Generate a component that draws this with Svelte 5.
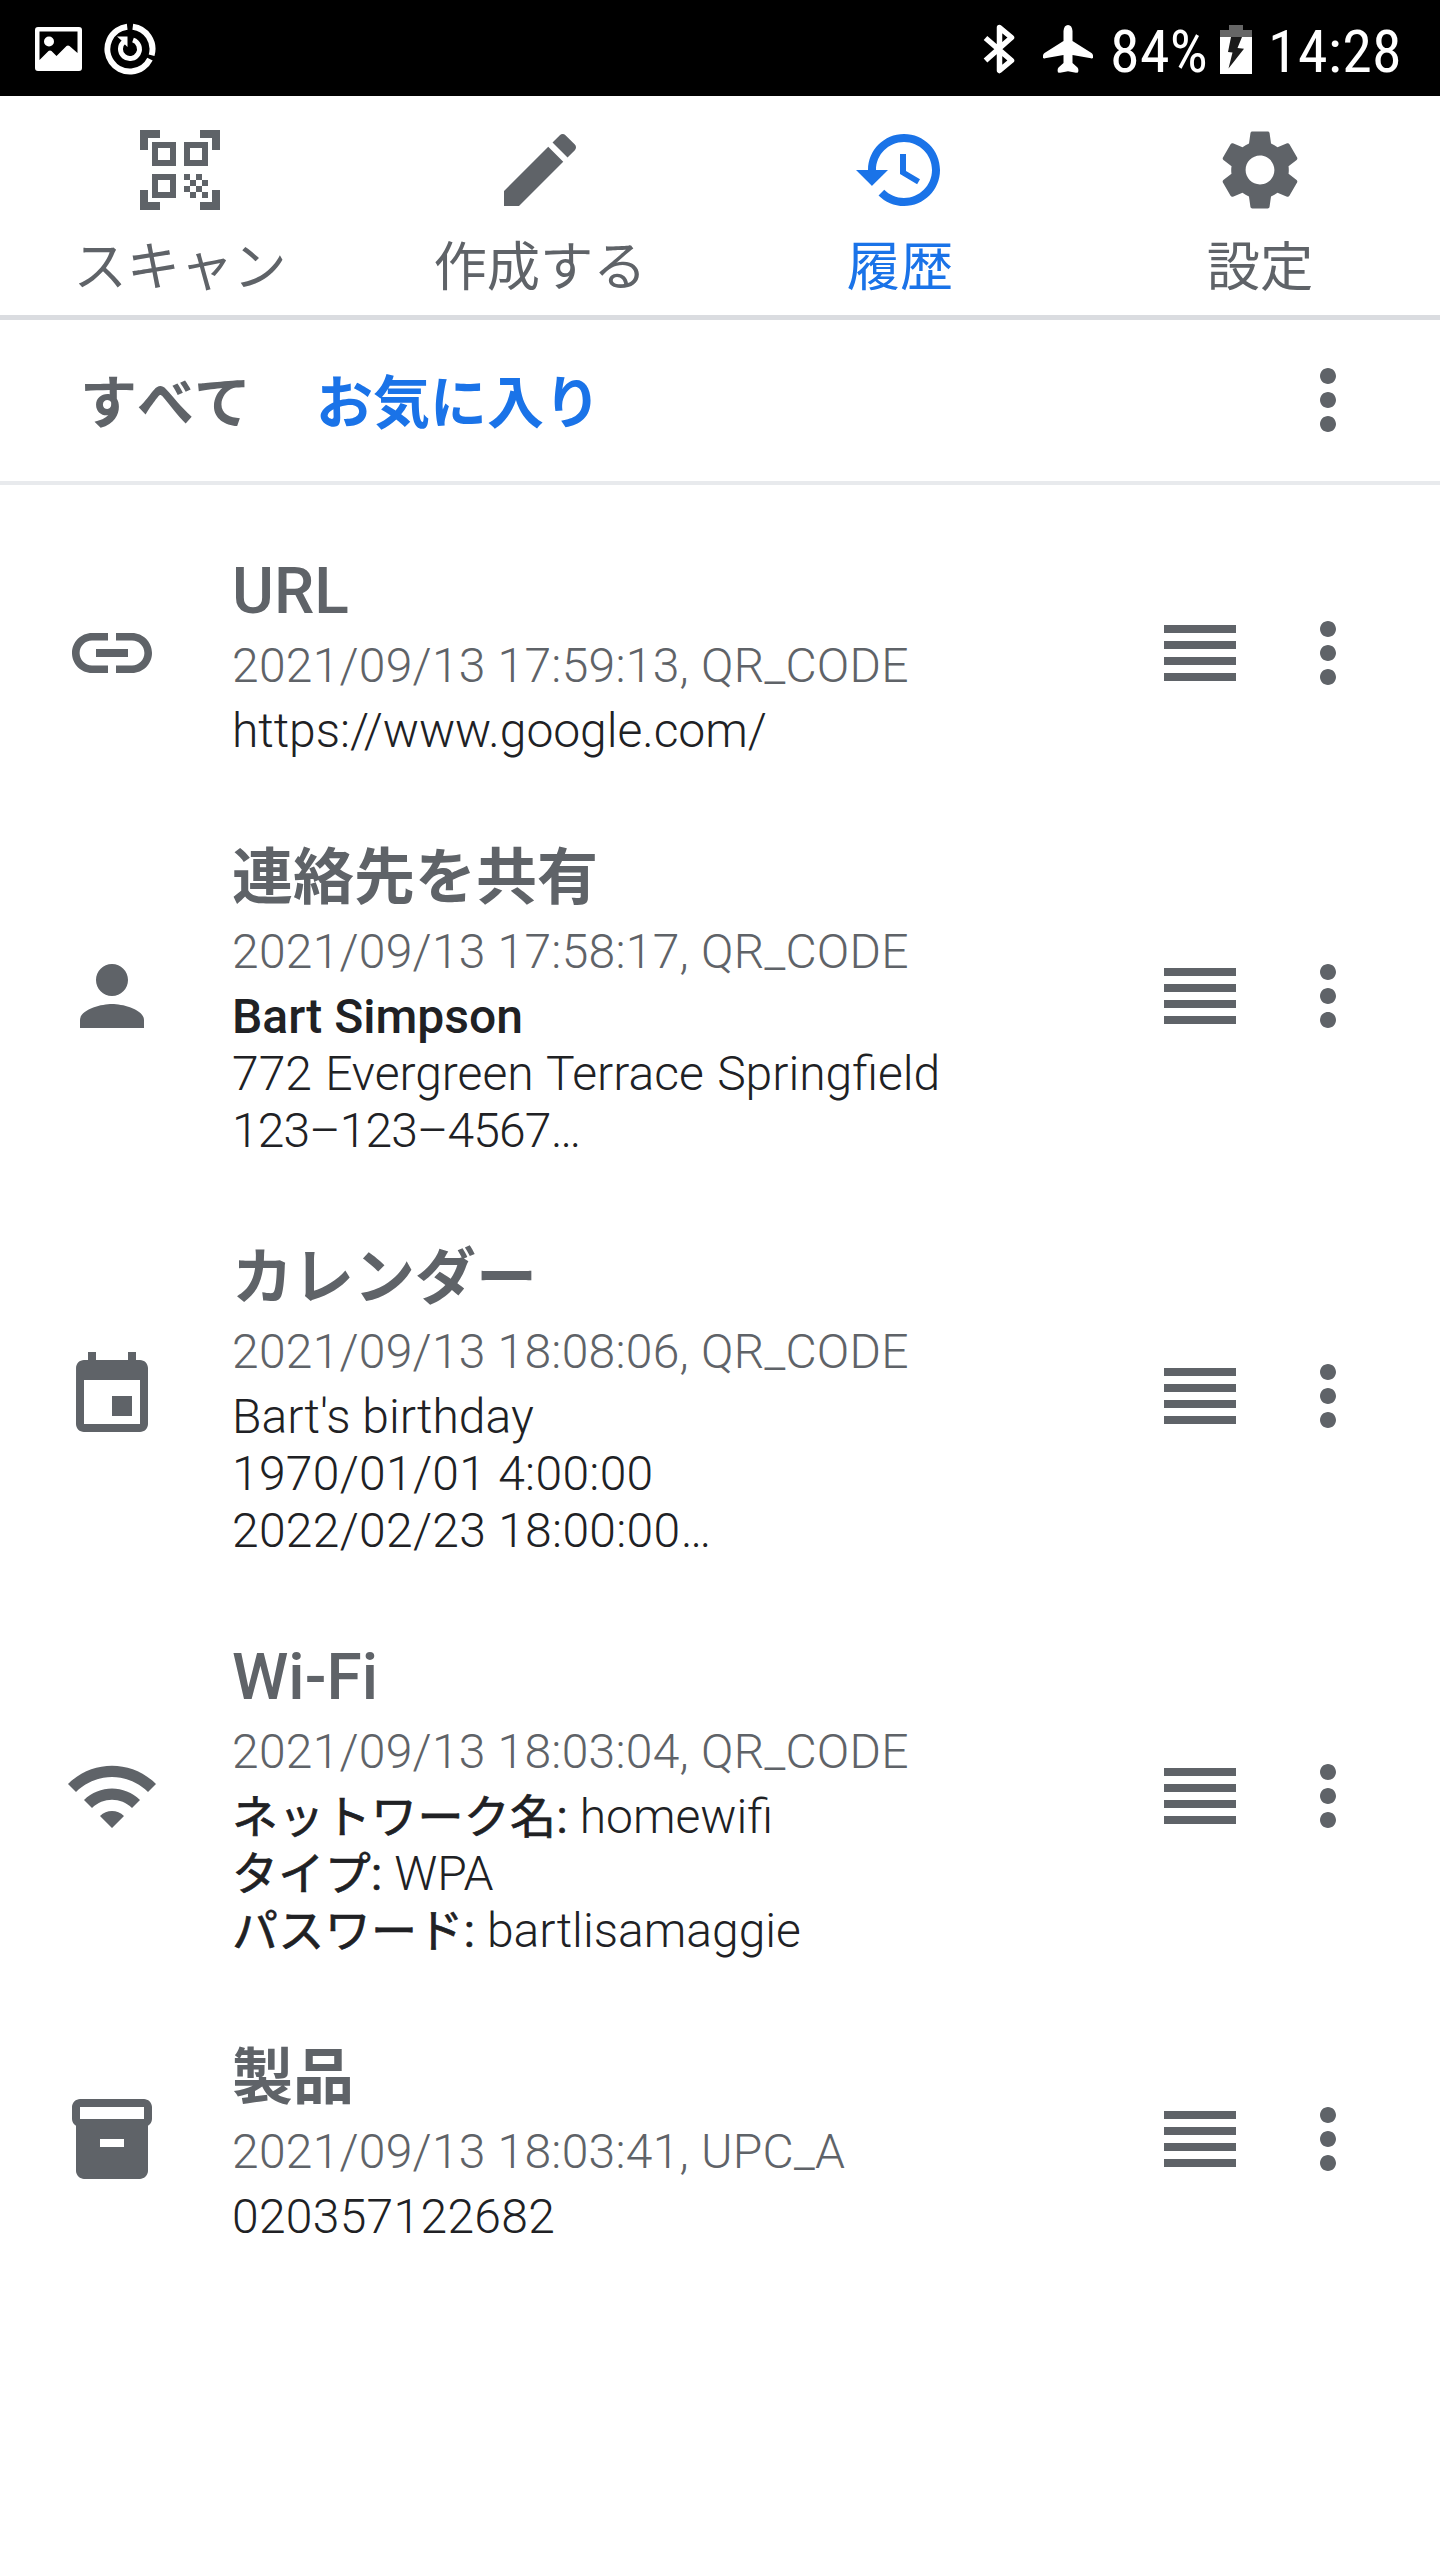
<script>
	const icons = {
		scan: 'M2 2h5v2H4v3H2zM17 2h5v5h-2V4h-3zM2 17h2v3h3v2H2zM20 17h2v5h-5v-2h3zM5 5v6h6V5zM6.5 6.5h3v3h-3zM13 5v6h6V5zM14.5 6.5h3v3h-3zM5 13v6h6v-6zM6.5 14.5h3v3h-3zM13 13h1.5v1.5H13zM16 13h1.5v1.5H16zM14.5 14.5H16V16h-1.5zM17.5 14.5H19V16h-1.5zM13 16h1.5v1.5H13zM16 16h1.5v1.5H16zM14.5 17.5H16V19h-1.5zM17.5 17.5H19V19h-1.5z',
		edit: 'M3 17.25V21h3.75L17.81 9.94l-3.75-3.75L3 17.25zM20.71 7.04c.39-.39.39-1.02 0-1.41l-2.34-2.34c-.39-.39-1.02-.39-1.41 0l-1.83 1.83 3.75 3.75 1.83-1.83z',
		history: 'M13 3c-4.97 0-9 4.03-9 9H1l3.89 3.89.07.14L9 12H6c0-3.87 3.13-7 7-7s7 3.13 7 7-3.13 7-7 7c-1.93 0-3.68-.79-4.94-2.06l-1.42 1.42C8.27 19.99 10.51 21 13 21c4.97 0 9-4.03 9-9s-4.03-9-9-9zm-1 5v5l4.28 2.54.72-1.21-3.5-2.08V8H12z',
		settings: 'M19.14 12.94c.04-.3.06-.61.06-.94 0-.32-.02-.64-.07-.94l2.03-1.58c.18-.14.23-.41.12-.61l-1.92-3.32c-.12-.22-.37-.29-.59-.22l-2.39.96c-.5-.38-1.03-.7-1.62-.94l-.36-2.54c-.04-.24-.24-.41-.48-.41h-3.84c-.24 0-.43.17-.47.41l-.36 2.54c-.59.24-1.13.57-1.62.94l-2.39-.96c-.22-.08-.47 0-.59.22L2.74 8.87c-.12.21-.08.47.12.61l2.03 1.58c-.05.3-.09.63-.09.94s.02.64.07.94l-2.03 1.58c-.18.14-.23.41-.12.61l1.92 3.32c.12.22.37.29.59.22l2.39-.96c.5.38 1.03.7 1.62.94l.36 2.54c.05.24.24.41.48.41h3.84c.24 0 .44-.17.47-.41l.36-2.54c.59-.24 1.13-.56 1.62-.94l2.39.96c.22.08.47 0 .59-.22l1.92-3.32c.12-.22.07-.47-.12-.61l-2.01-1.58zM12 15.6c-1.98 0-3.6-1.62-3.6-3.6s1.62-3.6 3.6-3.6 3.6 1.62 3.6 3.6-1.62 3.6-3.6 3.6z',
		link: 'M3.9 12c0-1.71 1.39-3.1 3.1-3.1h4V7H7c-2.76 0-5 2.24-5 5s2.24 5 5 5h4v-1.9H7c-1.71 0-3.1-1.39-3.1-3.1zM8 13h8v-2H8v2zm9-6h-4v1.9h4c1.71 0 3.1 1.39 3.1 3.1s-1.39 3.1-3.1 3.1h-4V17h4c2.76 0 5-2.24 5-5s-2.24-5-5-5z',
		person: 'M12 12c2.21 0 4-1.79 4-4s-1.79-4-4-4-4 1.79-4 4 1.79 4 4 4zm0 2c-2.67 0-8 1.34-8 4v2h16v-2c0-2.66-5.33-4-8-4z',
		event: 'M17 12h-5v5h5v-5zM16 1v2H8V1H6v2H5c-1.11 0-1.99.9-1.99 2L3 19c0 1.1.89 2 2 2h14c1.1 0 2-.9 2-2V5c0-1.1-.9-2-2-2h-1V1h-2zm3 18H5V8h14v11z',
		wifi: 'M1 9l2 2c4.97-4.97 13.03-4.97 18 0l2-2C16.93 2.93 7.08 2.93 1 9zm8 8l3 3 3-3c-1.65-1.66-4.34-1.66-6 0zm-4-4l2 2c2.76-2.76 7.24-2.76 10 0l2-2C15.14 9.14 8.87 9.14 5 13z',
		product: 'M20 2H4c-1 0-2 .9-2 2v3.01c0 .72.43 1.34 1 1.69V20c0 1.1 1.1 2 2 2h14c.9 0 2-.9 2-2V8.7c.57-.35 1-.97 1-1.69V4c0-1.1-1-2-2-2zm-5 12H9v-2h6v2zm5-7H4V4h16v3z',
		handle: 'M3 5h18v2H3zM3 9h18v2H3zM3 13h18v2H3zM3 17h18v2H3z',
		more: 'M12 8c1.1 0 2-.9 2-2s-.9-2-2-2-2 .9-2 2 .9 2 2 2zm0 2c-1.1 0-2 .9-2 2s.9 2 2 2 2-.9 2-2-.9-2-2-2zm0 6c-1.1 0-2 .9-2 2s.9 2 2 2 2-.9 2-2-.9-2-2-2z'
	};

	const nav = [
		{ icon: 'scan', label: 'スキャン' },
		{ icon: 'edit', label: '作成する' },
		{ icon: 'history', label: '履歴' },
		{ icon: 'settings', label: '設定' }
	];

	const tabs = ['すべて', 'お気に入り'];

	const items = [
		{
			icon: 'link',
			title: 'URL',
			meta: '2021/09/13 17:59:13, QR_CODE',
			lines: [{ text: 'https://www.google.com/', kind: 'url' }]
		},
		{
			icon: 'person',
			title: '連絡先を共有',
			meta: '2021/09/13 17:58:17, QR_CODE',
			lines: [
				{ label: 'Bart Simpson' },
				{ text: '772 Evergreen Terrace Springfield', kind: 'address' },
				{ text: '123–123–4567…', kind: 'phone' }
			]
		},
		{
			icon: 'event',
			title: 'カレンダー',
			meta: '2021/09/13 18:08:06, QR_CODE',
			lines: [
				{ text: "Bart's birthday" },
				{ text: '1970/01/01 4:00:00', kind: 'digits' },
				{ text: '2022/02/23 18:00:00…', kind: 'digits' }
			]
		},
		{
			icon: 'wifi',
			title: 'Wi-Fi',
			meta: '2021/09/13 18:03:04, QR_CODE',
			lines: [
				{ label: 'ネットワーク名:', text: 'homewifi' },
				{ label: 'タイプ:', text: 'WPA' },
				{ label: 'パスワード:', text: 'bartlisamaggie' }
			]
		},
		{
			icon: 'product',
			title: '製品',
			meta: '2021/09/13 18:03:41, UPC_A',
			lines: [{ text: '020357122682', kind: 'digits' }]
		}
	];

	let page = $state('history');
	let tab = $state('お気に入り');

	// Japanese text is set a little smaller than Latin
	function isJapanese(text) {
		return /[\u3040-\u30ff\u4e00-\u9fff]/.test(text);
	}
</script>

{#snippet icon(name)}
	<svg class="icon" viewBox="0 0 24 24"><path fill-rule="evenodd" d={icons[name]} /></svg>
{/snippet}

<div class="screen">
	<div class="status">
		<svg class="picture" viewBox="0 0 47 44">
			<path fill-rule="evenodd" d="M3 0h41q3 0 3 3v38q0 3-3 3H3q-3 0-3-3V3q0-3 3-3zM4.500 4.500V33l9-9q1.500-1 3 0l5 5 10-10q1.500-1 3 0l8 7V4.500z" />
			<circle cx="14" cy="14.500" r="5" />
		</svg>
		<svg class="sync" viewBox="0 0 52 52">
			<path class="ring" d="M23.200 3.700A22.500 22.500 0 1 0 46 36.200M28.800 3.700A22.500 22.500 0 0 1 47.600 32.200" />
			<path class="ring inner" d="M29 17A9.500 9.500 0 1 1 20 18.600" />
			<path d="M13 13.500h10.500v10.500l-3.500-3.500-2.500-3z" />
		</svg>
		<svg class="bluetooth" viewBox="0 0 32 50">
			<path d="M2.500 14L28.500 36.500 16.500 46.500V3.500l12 10L2.500 36.500" />
		</svg>
		<svg class="plane" viewBox="0 0 50 48">
			<path d="M25 0q4 0 4.500 6v10l19 12q2 1.500 1.500 5-1 .8-2 .3L29.500 30v8l5 4.500q1.500 2 .5 5l-2 .3-8-1.500-8 1.500-2-.3q-1-3 .5-5l5-4.500v-8L2 33.300q-1 .5-2-.3-.5-3.500 1.500-5l19-12V6Q21 0 25 0z" />
		</svg>
		<span class="battery-text">84%</span>
		<svg class="battery" viewBox="0 0 32 49">
			<path class="empty" d="M9 0h14v5h9v7H0V5h9z" />
			<path d="M0 12h32v37H0z" />
			<path class="bolt" d="M11 12h11l-4.500 11 6.500.7L8.500 43.500l4-16L8 27z" />
		</svg>
		<span class="clock">14:28</span>
	</div>

	<nav>
		{#each nav as item}
			<button class:active={page === item.icon} onclick={() => (page = item.icon)}>
				{@render icon(item.icon)}
				<span>{item.label}</span>
			</button>
		{/each}
	</nav>

	<div class="tabs">
		{#each tabs as name}
			<button class:active={tab === name} onclick={() => (tab = name)}>{name}</button>
		{/each}
		<div class="menu">{@render icon('more')}</div>
	</div>

	<div class="list">
		{#each items as item}
			<div class="row">
				{@render icon(item.icon)}
				<div class="text">
					<h2 class:ja={isJapanese(item.title)}>{item.title}</h2>
					<p class="meta">{item.meta}</p>
					{#each item.lines as line}
						<p class="line {line.kind ?? ''}">
							{#if line.label}<b class:ja={isJapanese(line.label)}>{line.label}</b>{/if}
							{line.text ?? ''}
						</p>
					{/each}
				</div>
				{@render icon('handle')}
				{@render icon('more')}
			</div>
		{/each}
	</div>
</div>

<style>
	:global(body) {
		margin: 0;
		background: #fff;
	}

	.screen {
		height: 2560px;
		background: #fff;
		color: #5f6368;
		font-family: Roboto, 'Noto Sans CJK JP', sans-serif;
		overflow: hidden;
	}

	button {
		margin: 0;
		padding: 0;
		border: 0;
		background: none;
		color: inherit;
		font-family: inherit;
		font-kerning: none;
	}

	.active {
		color: #1a73e8;
	}

	.icon {
		display: block;
		flex-shrink: 0;
		width: 96px;
		height: 96px;
		fill: currentColor;
	}

	.status {
		display: flex;
		align-items: center;
		box-sizing: border-box;
		height: 96px;
		padding: 2px 40px 0 35px;
		background: #000;
		color: #fff;
		fill: #fff;
		font-size: 60px;
		font-stretch: 75%;
		letter-spacing: 0.3px;
		white-space: nowrap;
	}

	.status span {
		padding-top: 4px;
	}

	.picture {
		width: 47px;
		height: 44px;
	}

	.sync {
		width: 52px;
		height: 52px;
		margin-left: 22px;
	}

	.ring {
		fill: none;
		stroke: #fff;
		stroke-width: 6;
	}

	.inner {
		stroke-width: 5;
	}

	.bluetooth {
		width: 32px;
		height: 50px;
		margin-left: auto;
		fill: none;
		stroke: #fff;
		stroke-width: 5.5;
		stroke-linejoin: round;
	}

	.plane {
		width: 50px;
		height: 48px;
		margin-left: 28px;
	}

	.battery-text {
		width: 98px;
		margin-left: 17px;
	}

	.battery {
		width: 32px;
		height: 49px;
		margin-left: 12px;
	}

	.empty {
		fill: #666;
	}

	.bolt {
		fill: #1a1a1a;
	}

	.clock {
		width: 132px;
		margin-left: 16px;
	}

	nav {
		display: grid;
		grid-template-columns: repeat(4, 1fr);
		height: 219px;
		border-bottom: 5px solid #dadce0;
	}

	nav button {
		display: flex;
		flex-direction: column;
		align-items: center;
		padding-top: 26px;
		font-size: 53.3px;
		line-height: 60px;
	}

	nav span {
		margin-top: 20px;
	}

	.tabs {
		display: flex;
		align-items: center;
		gap: 65px;
		height: 161px;
		padding: 0 64px 0 80px;
		border-bottom: 4px solid #e8eaed;
	}

	.tabs button {
		padding-top: 6px;
		font-size: 57px;
		font-weight: 700;
		line-height: 64px;
	}

	.menu {
		margin: -1px 0 0 auto;
	}

	.list {
		padding-top: 25px;
	}

	.row {
		display: flex;
		align-items: center;
		padding: 37px 64px;
		gap: 32px;
	}

	.text {
		flex: 1;
		padding-left: 40px;
	}

	h2 {
		margin: 0;
		font-size: 64px;
		font-weight: 500;
		line-height: 90px;
	}

	h2.ja {
		font-size: 61px;
		font-weight: 700;
		font-kerning: none;
	}

	p {
		margin: 0;
		font-size: 48px;
		font-weight: 300;
		line-height: 57px;
		white-space: nowrap;
	}

	.meta {
		margin-bottom: 8px;
		letter-spacing: 0.25px;
	}

	.line {
		color: #202124;
	}

	/* word-spacing keeps the fi ligature */
	.address {
		word-spacing: 1.6px;
	}

	.url {
		letter-spacing: -0.05px;
	}

	.phone {
		letter-spacing: -0.85px;
	}

	.digits {
		letter-spacing: 0.3px;
	}

	b {
		font-weight: 500;
		line-height: 1;
	}

	b.ja {
		font-size: 46px;
		font-weight: 400;
		font-kerning: none;
		letter-spacing: 0.35px;
		-webkit-text-stroke: 0.7px #202124;
	}
</style>
